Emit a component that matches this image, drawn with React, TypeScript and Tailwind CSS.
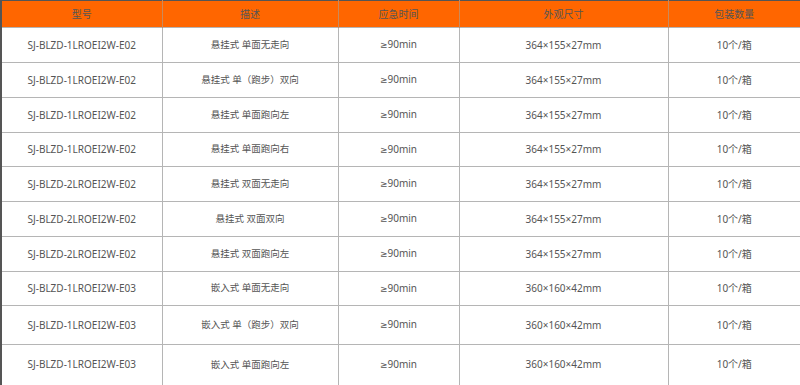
import React from "react";

const rows: [string, string, string, string, string][] = [
  ["SJ-BLZD-1LROEI2W-E02", "悬挂式 单面无走向", "90min", "364×155×27mm", "10个/箱"],
  ["SJ-BLZD-1LROEI2W-E02", "悬挂式 单（跑步）双向", "90min", "364×155×27mm", "10个/箱"],
  ["SJ-BLZD-1LROEI2W-E02", "悬挂式 单面跑向左", "90min", "364×155×27mm", "10个/箱"],
  ["SJ-BLZD-1LROEI2W-E02", "悬挂式 单面跑向右", "90min", "364×155×27mm", "10个/箱"],
  ["SJ-BLZD-2LROEI2W-E02", "悬挂式 双面无走向", "90min", "364×155×27mm", "10个/箱"],
  ["SJ-BLZD-2LROEI2W-E02", "悬挂式 双面双向", "90min", "364×155×27mm", "10个/箱"],
  ["SJ-BLZD-2LROEI2W-E02", "悬挂式 双面跑向左", "90min", "364×155×27mm", "10个/箱"],
  ["SJ-BLZD-1LROEI2W-E03", "嵌入式 单面无走向", "90min", "360×160×42mm", "10个/箱"],
  ["SJ-BLZD-1LROEI2W-E03", "嵌入式 单（跑步）双向", "90min", "360×160×42mm", "10个/箱"],
  ["SJ-BLZD-1LROEI2W-E03", "嵌入式 单面跑向左", "90min", "360×160×42mm", "10个/箱"],
];

const heights = ["h-[35px]", "h-[35px]", "h-[35px]", "h-[34px]", "h-[35px]", "h-[35px]", "h-[35px]", "h-[34px]", "h-[39px]", "h-[40px]"];

export default function App() {
  return (
    <div
      className="w-[800px] h-[385px] overflow-hidden bg-white text-[10px] text-[#555]"
      style={{ fontFamily: '"Noto Sans", "Noto Sans CJK SC", sans-serif' }}
    >
      <table className="w-[800px] table-fixed border-collapse border-t border-t-[#555] border-l-2 border-l-[#555] border-r-2 border-r-[#555]">
        <colgroup>
          <col className="w-[161px]" />
          <col className="w-[176px]" />
          <col className="w-[121px]" />
          <col className="w-[209px]" />
          <col className="w-[133px]" />
        </colgroup>
        <thead>
          <tr className="h-[27px] bg-[#ff6600]">
            {["型号", "描述", "应急时间", "外观尺寸", "包装数量"].map((h) => (
              <th key={h} className="font-normal text-[#555] text-center border-r border-r-[#c98a5c] last:border-r-0 p-0">
                {h}
              </th>
            ))}
          </tr>
        </thead>
        <tbody>
          {rows.map((r, i) => (
            <tr key={i} className={heights[i]}>
              {r.map((c, j) => (
                <td
                  key={j}
                  className={
                    j === 1
                      ? "text-center text-[9.5px] p-0 border-t border-t-[#b5b5b5] border-r border-r-[#b5b5b5]"
                      : "text-center p-0 border-t border-t-[#b5b5b5] border-r border-r-[#b5b5b5] last:border-r-0"
                  }
                >
                  {j === 2 ? (
                    <>
                      <span className="font-['DejaVu_Sans'] text-[9px]">≥</span>
                      {c}
                    </>
                  ) : (
                    c
                  )}
                </td>
              ))}
            </tr>
          ))}
        </tbody>
      </table>
    </div>
  );
}
